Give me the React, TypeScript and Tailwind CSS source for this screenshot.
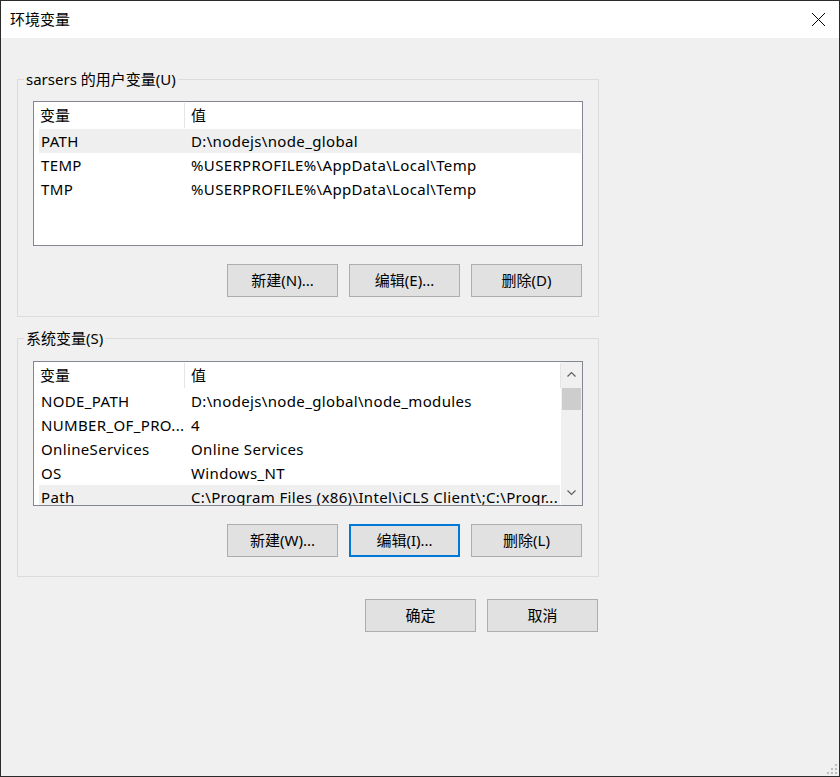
import React from 'react';

type Row = { name: string; value: string; selected?: boolean };

const userVars: Row[] = [
  { name: 'PATH', value: 'D:\\nodejs\\node_global', selected: true },
  { name: 'TEMP', value: '%USERPROFILE%\\AppData\\Local\\Temp' },
  { name: 'TMP', value: '%USERPROFILE%\\AppData\\Local\\Temp' },
];

const sysVars: Row[] = [
  { name: 'NODE_PATH', value: 'D:\\nodejs\\node_global\\node_modules' },
  { name: 'NUMBER_OF_PRO...', value: '4' },
  { name: 'OnlineServices', value: 'Online Services' },
  { name: 'OS', value: 'Windows_NT' },
  { name: 'Path', value: 'C:\\Program Files (x86)\\Intel\\iCLS Client\\;C:\\Progr...', selected: true },
];

const Chevron = ({ up }: { up?: boolean }) => (
  <svg width="9" height="6" viewBox="0 0 9 6" className="block">
    <path
      d={up ? 'M0.5 5.5 L4.5 1.5 L8.5 5.5' : 'M0.5 0.5 L4.5 4.5 L8.5 0.5'}
      fill="none"
      stroke="#606060"
      strokeWidth="1.2"
    />
  </svg>
);

const Scrollbar = () => (
  <div className="flex w-[21px] shrink-0 flex-col bg-[#f0f0f0]">
    <div className="flex h-[24px] shrink-0 items-center justify-center">
      <Chevron up />
    </div>
    <div className="mx-px mt-[2px] h-[22px] shrink-0 bg-[#cdcdcd]" />
    <div className="flex-1" />
    <div className="flex h-[24px] shrink-0 items-center justify-center">
      <Chevron />
    </div>
  </div>
);

const VarList = ({ rows, scroll }: { rows: Row[]; scroll?: boolean }) => (
  <div className="flex h-[145px] w-[550px] overflow-hidden border border-[#828790] bg-white">
    <div className="flex min-w-0 flex-1 flex-col overflow-hidden">
      <div className="flex h-[27px] shrink-0 items-center">
        <div className="flex h-[25px] w-[151px] shrink-0 items-center border-r border-[#e5e5e5] pl-[6px]">变量</div>
        <div className="flex-1 pl-[6px]">值</div>
        {scroll && <div className="h-[25px] w-px bg-[#e5e5e5]" />}
      </div>
      {rows.map((r) => (
        <div
          key={r.name}
          className={`ml-[5px] mr-[1px] flex h-[24px] shrink-0 items-center whitespace-nowrap tracking-[0.35px] ${r.selected ? 'bg-[#efefef]' : ''}`}
        >
          <div className="w-[146px] shrink-0 overflow-hidden pl-[2px]">{r.name}</div>
          <div className="overflow-hidden pl-[6px]">{r.value}</div>
        </div>
      ))}
    </div>
    {scroll && <Scrollbar />}
  </div>
);

const Btn = ({ label, focused }: { label: string; focused?: boolean }) => (
  <button
    className={`flex h-[33px] w-[111px] items-center justify-center bg-[#e1e1e1] ${
      focused ? 'border-2 border-[#0078d7]' : 'border border-[#adadad]'
    }`}
  >
    {label}
  </button>
);

const Group = ({ title, children, top, pt }: { title: string; children: React.ReactNode; top: string; pt: string }) => (
  <fieldset className={`w-[582px] border border-[#dcdcdc] ${top}`}>
    <legend className="ml-[6px] px-[2px] leading-[20px]">{title}</legend>
    <div className={`flex flex-col px-[15px] pb-[19px] ${pt}`}>{children}</div>
  </fieldset>
);

export default function App() {
  return (
    <div
      className="relative flex h-[777px] w-[840px] flex-col border border-[#2b2b2b] bg-[#f0f0f0] text-[15px] text-black"
      style={{ fontFamily: '"Noto Sans", "Noto Sans CJK SC", sans-serif' }}
    >
      <div className="flex h-[37px] shrink-0 items-center justify-between bg-white pl-[9px] pr-[13px]">
        <span>环境变量</span>
        <svg width="15" height="15" viewBox="0 0 15 15">
          <path d="M1 1 L14 14 M14 1 L1 14" stroke="#000" strokeWidth="1" />
        </svg>
      </div>

      <div className="ml-[16px] flex flex-col">
        <Group title="sarsers 的用户变量(U)" top="mt-[31px]" pt="pt-[12px]">
          <VarList rows={userVars} />
          <div className="mr-[1px] mt-[18px] flex justify-end gap-[11px]">
            <Btn label="新建(N)..." />
            <Btn label="编辑(E)..." />
            <Btn label="删除(D)" />
          </div>
        </Group>

        <Group title="系统变量(S)" top="mt-[11px]" pt="pt-[13px]">
          <VarList rows={sysVars} scroll />
          <div className="mr-[1px] mt-[18px] flex justify-end gap-[11px]">
            <Btn label="新建(W)..." />
            <Btn label="编辑(I)..." focused />
            <Btn label="删除(L)" />
          </div>
        </Group>

        <div className="mt-[22px] flex w-[582px] justify-end gap-[11px] pr-[1px]">
          <Btn label="确定" />
          <Btn label="取消" />
        </div>
      </div>

      <svg width="10" height="10" viewBox="0 0 10 10" className="absolute bottom-[2px] right-[2px]">
        <g fill="#bfbfbf">
          <rect x="8" y="0" width="2" height="2" />
          <rect x="4" y="4" width="2" height="2" />
          <rect x="8" y="4" width="2" height="2" />
          <rect x="0" y="8" width="2" height="2" />
          <rect x="4" y="8" width="2" height="2" />
          <rect x="8" y="8" width="2" height="2" />
        </g>
      </svg>
    </div>
  );
}
